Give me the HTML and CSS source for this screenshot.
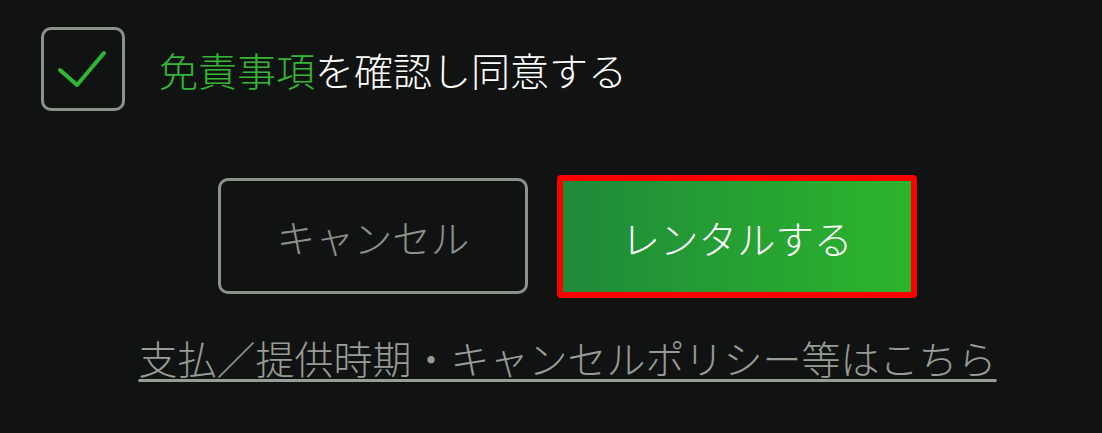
FILE: index.html
```html
<!DOCTYPE html>
<html lang="ja">
<head>
    <meta charset="UTF-8">
    <meta name="viewport" content="width=device-width, initial-scale=1.0">
    <title>レンタル確認</title>
    <link rel="stylesheet" href="styles.css">
</head>
<body>
    <div class="container">
        <label class="agree">
            <span class="checkbox">
                <svg width="60" height="60" viewBox="0 0 60 60">
                    <polyline points="7,31 24,46 51,14" fill="none" stroke="#2fb733" stroke-width="4" stroke-linecap="round" stroke-linejoin="round"/>
                </svg>
            </span>
            <span class="agree-text"><a href="#" class="terms">免責事項</a>を確認し同意する</span>
        </label>

        <div class="buttons">
            <button type="button" class="btn-cancel">キャンセル</button>
            <button type="button" class="btn-rent">レンタルする</button>
        </div>

        <div class="policy">
            <a href="#">支払／提供時期・キャンセルポリシー等はこちら</a>
        </div>
    </div>
</body>
</html>
```

FILE: styles.css
```css
body {
    margin: 0;
    padding: 0;
    background: #111312;
    font-family: "Noto Sans CJK JP", "Noto Sans", sans-serif;
    font-weight: 300;
    height: 433px;
    overflow: hidden;
}

.container {
    padding: 27px 8px 0 41px;
    display: flex;
    flex-direction: column;
}

.agree {
    display: flex;
    align-items: center;
    gap: 34px;
}

.checkbox {
    width: 78px;
    height: 78px;
    border: 3px solid #8c9189;
    border-radius: 10px;
    display: flex;
    justify-content: center;
    align-items: center;
}

.agree-text {
    color: #fff;
    font-size: 39px;
    line-height: 1;
}

.terms {
    color: #35b735;
    text-decoration: none;
}

.buttons {
    display: flex;
    justify-content: center;
    gap: 29px;
    margin-top: 64px;
}

.btn-cancel,
.btn-rent {
    font-family: inherit;
    font-weight: 300;
    font-size: 38.5px;
    cursor: pointer;
}

.btn-cancel {
    width: 310px;
    height: 116px;
    margin-top: 3px;
    background: transparent;
    border: 3px solid #8c9189;
    border-radius: 10px;
    color: #8c9189;
}

.btn-rent {
    width: 360px;
    height: 123px;
    border: 6px solid #ff0000;
    border-radius: 4px;
    background: linear-gradient(90deg, #1f8a3a, #2cb52c);
    color: #fff;
}

.policy {
    text-align: center;
    margin-top: 31px;
}

.policy a {
    color: #979c95;
    font-size: 39px;
    text-underline-offset: 5px;
    text-decoration-thickness: 3px;
}
```
